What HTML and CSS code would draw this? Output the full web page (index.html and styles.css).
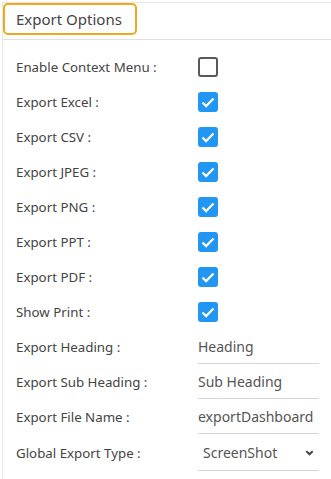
FILE: index.html
```html
<!DOCTYPE html>
<html>
<head>
    <title>Export Options</title>
    <link rel="stylesheet" href="styles.css">
</head>
<body>
    <div class="panel">
        <div class="tabs">
            <div class="tab">Export Options</div>
        </div>
        <div class="form">
            <div class="row"><label>Enable Context Menu :</label><span class="box"></span></div>
            <div class="row"><label>Export Excel :</label><span class="box on"><svg viewBox="0 0 20 20"><path d="M4.5 10.5l3.6 3.6L15.5 6.5"/></svg></span></div>
            <div class="row"><label>Export CSV :</label><span class="box on"><svg viewBox="0 0 20 20"><path d="M4.5 10.5l3.6 3.6L15.5 6.5"/></svg></span></div>
            <div class="row"><label>Export JPEG :</label><span class="box on"><svg viewBox="0 0 20 20"><path d="M4.5 10.5l3.6 3.6L15.5 6.5"/></svg></span></div>
            <div class="row"><label>Export PNG :</label><span class="box on"><svg viewBox="0 0 20 20"><path d="M4.5 10.5l3.6 3.6L15.5 6.5"/></svg></span></div>
            <div class="row"><label>Export PPT :</label><span class="box on"><svg viewBox="0 0 20 20"><path d="M4.5 10.5l3.6 3.6L15.5 6.5"/></svg></span></div>
            <div class="row"><label>Export PDF :</label><span class="box on"><svg viewBox="0 0 20 20"><path d="M4.5 10.5l3.6 3.6L15.5 6.5"/></svg></span></div>
            <div class="row"><label>Show Print :</label><span class="box on"><svg viewBox="0 0 20 20"><path d="M4.5 10.5l3.6 3.6L15.5 6.5"/></svg></span></div>
            <div class="row"><label>Export Heading :</label><input type="text" value="Heading"></div>
            <div class="row"><label>Export Sub Heading :</label><input type="text" value="Sub Heading"></div>
            <div class="row"><label>Export File Name :</label><input type="text" value="exportDashboard"></div>
            <div class="row"><label>Global Export Type :</label>
                <div class="select">
                    <span>ScreenShot</span>
                    <svg viewBox="0 0 12 12"><path d="M2.5 4.5L6 8l3.5-3.5"/></svg>
                </div>
            </div>
        </div>
    </div>
</body>
</html>
```

FILE: styles.css
```css
body { margin: 0; font-family: "Noto Sans", sans-serif; color: #444; background: #fff; }
.panel { margin: 2px 0 0 2px; border-left: 1px solid #e6e6e6; height: 477px; }
.tabs { display: flex; border-top: 1px solid #e6e6e6; border-bottom: 1px solid #e0e0e0; height: 36px; }
.tab { width: 119px; height: 28px; border: 2.5px solid #f0a81c; border-radius: 5px; padding-left: 11px; font-size: 15px; line-height: 28px; color: #444; }
.form { padding: 0 0 0 13px; }
.row { display: flex; align-items: center; height: 35.1px; }
.row:first-child { margin-top: 9px; }
label { width: 182px; font-size: 13.3px; color: #444; }
.box { box-sizing: border-box; width: 20px; height: 20px; border: 2px solid #595959; border-radius: 3px; display: flex; align-items: center; justify-content: center; }
.box.on { border: none; background: #2196f3; }
.box svg { width: 20px; height: 20px; fill: none; stroke: #fff; stroke-width: 2.2; }
input { width: 121px; margin-top: 6px; border: none; border-bottom: 1px solid #d6d6d6; padding: 0 0 7px; font-family: inherit; font-size: 14px; color: #555; outline: none; }
.select { width: 121px; margin-top: 9px; display: flex; align-items: center; justify-content: space-between; border-bottom: 1px solid #d6d6d6; padding: 0 0 8px; font-size: 14px; color: #555; }
.select span { padding-left: 5px; }
.select svg { width: 11px; height: 11px; margin-right: 4px; fill: none; stroke: #444; stroke-width: 2.2; }
```
